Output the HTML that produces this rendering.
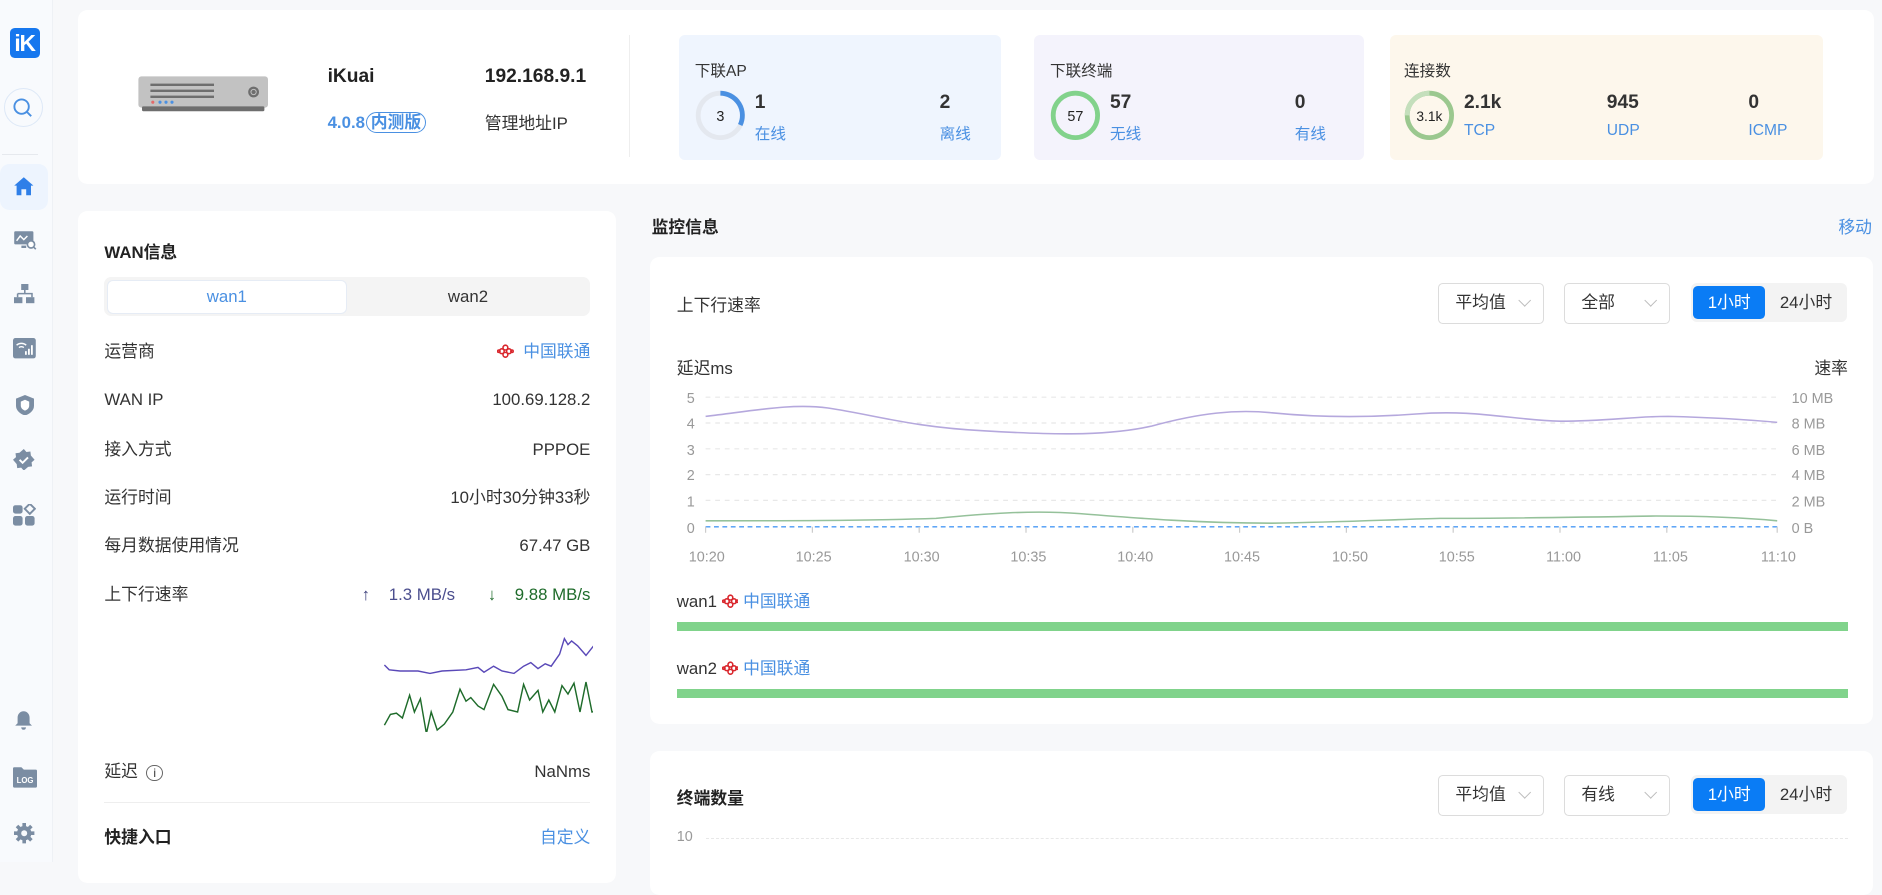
<!DOCTYPE html>
<html><head><meta charset="utf-8">
<style>
html{zoom:1.2}
*{box-sizing:border-box;margin:0;padding:0}
body{width:1569px;height:718px;overflow:hidden;background:#f7f8fa;font-family:"Liberation Sans","Noto Sans CJK SC",sans-serif;color:#333;position:relative;font-size:14px}
.a{position:absolute}
.card{position:absolute;background:#fff;border-radius:8px}
.side{left:0;top:0;width:44px;height:718px;background:#f8fafd;border-right:1px solid #eef1f5}
.blue{color:#4a90e2}
.sel{position:absolute;height:34px;border:1px solid #dcdcdc;border-radius:4px;background:#fff;font-size:14px;color:#333;padding:0 0 0 14px;line-height:32px}
.sel:after{content:"";position:absolute;right:12px;top:10px;width:7px;height:7px;border-right:1px solid #bbb;border-bottom:1px solid #bbb;transform:rotate(45deg)}
.seg{position:absolute;height:32px;background:#f3f3f3;border-radius:5px;width:130px}
.seg span{position:absolute;top:2px;height:28px;line-height:28px;font-size:14px;text-align:center}
.row{position:absolute;left:87px;width:405px;font-size:14px;color:#333;display:flex;justify-content:space-between;align-items:center;height:20px;line-height:20px}
.row b{font-weight:normal;display:flex;align-items:center}
.uni{display:inline-block;width:14px;height:12px;vertical-align:-1px}
</style></head><body>
<svg width="0" height="0" style="position:absolute"><defs><g id="u"><g fill="none" stroke="#d9262c" stroke-width="1.3"><circle cx="7" cy="3" r="2"/><circle cx="7" cy="9" r="2"/><circle cx="4" cy="6" r="2"/><circle cx="10" cy="6" r="2"/><circle cx="1.5" cy="6" r="1"/><circle cx="12.5" cy="6" r="1"/></g></g></defs></svg>
<div class="a side">
  <div class="a" style="left:8px;top:23px;width:25px;height:25px;background:#1677ee;border-radius:4px;color:#fff;font-weight:bold;font-size:19px;line-height:25px;text-align:center;letter-spacing:-1px">iK</div>
  <div class="a" style="left:3px;top:73px;width:33px;height:33px;border:1px solid #dde8f7;border-radius:50%"></div>
  <svg class="a" style="left:10px;top:81px" width="18" height="18" viewBox="0 0 18 18"><circle cx="8" cy="8" r="6" fill="none" stroke="#4a90e2" stroke-width="1.6"/><path d="M12.5 12.5l3.5 3.5" stroke="#4a90e2" stroke-width="1.6"/></svg>
  <div class="a" style="left:2px;top:128px;width:30px;height:1px;background:#e6e9ee"></div>
  <div class="a" style="left:0;top:137px;width:40px;height:38px;background:#edf4fe;border-radius:8px"></div>
  <svg class="a" style="left:11px;top:147px" width="18" height="17" viewBox="0 0 18 17"><path d="M9 1L1 8h2v8h4v-5h4v5h4V8h2z" fill="#2f7fe8"/></svg>
  <svg class="a" style="left:11px;top:192px" width="20" height="18" viewBox="0 0 20 18"><rect x="1" y="1" width="16" height="11" rx="1" fill="#7b8da3"/><path d="M3 9l3-4 3 3 3-3" stroke="#fff" stroke-width="1.2" fill="none"/><rect x="7" y="13" width="4" height="2" fill="#7b8da3"/><circle cx="15" cy="12" r="3" fill="#fff" stroke="#7b8da3" stroke-width="1.4"/><path d="M17 14l2 2" stroke="#7b8da3" stroke-width="1.4"/></svg>
  <svg class="a" style="left:12px;top:237px" width="18" height="17" viewBox="0 0 18 17"><rect x="6" y="0" width="6" height="5" fill="#7b8da3"/><path d="M9 5v3M3 8h12v3M3 8v3" stroke="#7b8da3" stroke-width="1.3" fill="none"/><rect x="0" y="11" width="7" height="5" fill="#7b8da3"/><rect x="10" y="11" width="7" height="5" fill="#7b8da3"/></svg>
  <svg class="a" style="left:11px;top:282px" width="19" height="17" viewBox="0 0 19 17"><rect x="0" y="0" width="19" height="17" rx="2" fill="#7b8da3"/><path d="M3 6a6 6 0 0 1 8 0M5 8a3 3 0 0 1 4 0" stroke="#fff" stroke-width="1.2" fill="none"/><rect x="10" y="11" width="1.5" height="3" fill="#fff"/><rect x="12.5" y="9" width="1.5" height="5" fill="#fff"/><rect x="15" y="6" width="1.5" height="8" fill="#fff"/></svg>
  <svg class="a" style="left:13px;top:329px" width="15" height="17" viewBox="0 0 15 17"><path d="M7.5 0L15 3v6c0 4-3.5 7-7.5 8C3.5 16 0 13 0 9V3z" fill="#7b8da3"/><path d="M7.5 4L11 5.5v3.5c0 2-1.7 3.5-3.5 4-1.8-.5-3.5-2-3.5-4V5.5z" fill="#fff"/></svg>
  <svg class="a" style="left:11px;top:374px" width="18" height="18" viewBox="0 0 18 18"><path d="M9 0l2.2 2.5 3.3-.4.4 3.3L18 9l-2.5 2.2.4 3.3-3.3.4L9 18l-2.2-2.5-3.3.4-.4-3.3L0 9l2.5-2.2-.4-3.3 3.3-.4z" fill="#7b8da3"/><path d="M5.5 9l2.5 2.5 4.5-4.5" stroke="#fff" stroke-width="1.6" fill="none"/></svg>
  <svg class="a" style="left:11px;top:420px" width="19" height="19" viewBox="0 0 19 19"><rect x="0" y="1" width="8" height="7" rx="2" fill="#7b8da3"/><rect x="0" y="10" width="8" height="8" rx="2" fill="#7b8da3"/><rect x="10" y="10" width="8" height="8" rx="2" fill="#7b8da3"/><rect x="11" y="1" width="6" height="6" transform="rotate(45 14 4)" fill="none" stroke="#7b8da3" stroke-width="1.6"/></svg>
  <svg class="a" style="left:12px;top:592px" width="16" height="17" viewBox="0 0 16 17"><path d="M8 1C5 1 3 3.5 3 6.5V11L1 13h14l-2-2V6.5C13 3.5 11 1 8 1z" fill="#7b8da3"/><path d="M6 14.5a2 2 0 0 0 4 0" fill="#7b8da3"/></svg>
  <svg class="a" style="left:11px;top:638px" width="20" height="19" viewBox="0 0 20 19"><path d="M0 2a1 1 0 0 1 1-1h6l2 2h10a1 1 0 0 1 1 1v13a1 1 0 0 1-1 1H1a1 1 0 0 1-1-1z" fill="#7b8da3"/><text x="10" y="14" font-size="6.5" font-weight="bold" fill="#fff" text-anchor="middle" font-family="Liberation Sans">LOG</text></svg>
  <svg class="a" style="left:12px;top:686px" width="17" height="17" viewBox="0 0 17 17"><circle cx="8.5" cy="8.5" r="6" fill="#7b8da3"/><g stroke="#7b8da3" stroke-width="3"><path d="M8.5 0v17M0 8.5h17M2.5 2.5l12 12M14.5 2.5l-12 12"/></g><circle cx="8.5" cy="8.5" r="2.5" fill="#f8fafd"/></svg>
</div>

<div class="card" style="left:65px;top:8px;width:1497px;height:145px"></div>
<svg class="a" style="left:113px;top:62px" width="112" height="34" viewBox="0 0 112 34"><rect x="2" y="2" width="108" height="26" rx="2.5" fill="#c2c2c2"/><rect x="5" y="27" width="102" height="4" rx="1" fill="#6e6e6e"/><rect x="12" y="8" width="53" height="2" fill="#6e6e6e"/><rect x="12" y="13" width="53" height="2" fill="#6e6e6e"/><rect x="12" y="18" width="53" height="2" fill="#6e6e6e"/><circle cx="14" cy="23.5" r="1.3" fill="#e36a6a"/><circle cx="20" cy="23.5" r="1.3" fill="#4a90e2"/><circle cx="25" cy="23.5" r="1.3" fill="#4a90e2"/><circle cx="30" cy="23.5" r="1.3" fill="#4a90e2"/><circle cx="98" cy="15" r="4.5" fill="#6e6e6e"/><circle cx="98" cy="15" r="2.2" fill="none" stroke="#c2c2c2" stroke-width=".8"/></svg>
<div class="a" style="left:273px;top:55px;font-size:16px;font-weight:bold;color:#222">iKuai</div>
<div class="a" style="left:273px;top:91px;font-size:14px;color:#4a90e2;font-weight:bold">4.0.8<span style="border:1px solid #4a90e2;border-radius:10px;padding:0 3px;margin-left:1px">内测版</span></div>
<div class="a" style="left:404px;top:55px;font-size:16px;font-weight:bold;color:#222">192.168.9.1</div>
<div class="a" style="left:404px;top:92px;font-size:14px;color:#333">管理地址IP</div>
<div class="a" style="left:524px;top:29px;width:1px;height:102px;background:#eee"></div>

<div class="a" style="left:566px;top:29px;width:268px;height:104px;background:#eff5fe;border-radius:5px"></div>
<div class="a" style="left:579px;top:49px;font-size:13px">下联AP</div>
<svg class="a" style="left:578px;top:74px" width="44" height="44" viewBox="0 0 44 44"><circle cx="22" cy="22" r="18.5" fill="none" stroke="#e4e8ef" stroke-width="4"/><path d="M22 3.5A18.5 18.5 0 0 1 38.5 30" fill="none" stroke="#4a90e2" stroke-width="4"/><text x="22" y="26.5" font-size="12" text-anchor="middle" fill="#222" font-family="Liberation Sans">3</text></svg>
<div class="a" style="left:629px;top:77px;font-size:16px;font-weight:bold">1</div>
<div class="a blue" style="left:629px;top:102px;font-size:13px">在线</div>
<div class="a" style="left:783px;top:77px;font-size:16px;font-weight:bold">2</div>
<div class="a blue" style="left:783px;top:102px;font-size:13px">离线</div>

<div class="a" style="left:862px;top:29px;width:275px;height:104px;background:#f4f3fc;border-radius:5px"></div>
<div class="a" style="left:875px;top:49px;font-size:13px">下联终端</div>
<svg class="a" style="left:874px;top:74px" width="44" height="44" viewBox="0 0 44 44"><circle cx="22" cy="22" r="18.5" fill="none" stroke="#82d28b" stroke-width="4"/><text x="22" y="26.5" font-size="12" text-anchor="middle" fill="#222" font-family="Liberation Sans">57</text></svg>
<div class="a" style="left:925px;top:77px;font-size:16px;font-weight:bold">57</div>
<div class="a blue" style="left:925px;top:102px;font-size:13px">无线</div>
<div class="a" style="left:1079px;top:77px;font-size:16px;font-weight:bold">0</div>
<div class="a blue" style="left:1079px;top:102px;font-size:13px">有线</div>

<div class="a" style="left:1158px;top:29px;width:361px;height:104px;background:#fdf7ec;border-radius:5px"></div>
<div class="a" style="left:1170px;top:49px;font-size:13px">连接数</div>
<svg class="a" style="left:1169px;top:74px" width="44" height="44" viewBox="0 0 44 44"><circle cx="22" cy="22" r="18.5" fill="none" stroke="#9bc88f" stroke-width="4"/><path d="M22 3.5A18.5 18.5 0 0 0 3.5 22" fill="none" stroke="#c4dfbc" stroke-width="4"/><text x="22" y="26.5" font-size="11.5" text-anchor="middle" fill="#222" font-family="Liberation Sans">3.1k</text></svg>
<div class="a" style="left:1220px;top:77px;font-size:16px;font-weight:bold">2.1k</div>
<div class="a blue" style="left:1220px;top:102px;font-size:13px">TCP</div>
<div class="a" style="left:1339px;top:77px;font-size:16px;font-weight:bold">945</div>
<div class="a blue" style="left:1339px;top:102px;font-size:13px">UDP</div>
<div class="a" style="left:1457px;top:77px;font-size:16px;font-weight:bold">0</div>
<div class="a blue" style="left:1457px;top:102px;font-size:13px">ICMP</div>

<div class="card" style="left:65px;top:176px;width:448px;height:560px"></div>
<div class="a" style="left:87px;top:199px;font-size:14px;font-weight:bold;color:#222">WAN信息</div>
<div class="a" style="left:87px;top:231px;width:405px;height:32px;background:#f4f4f4;border-radius:6px"></div>
<div class="a" style="left:89px;top:233px;width:200px;height:29px;background:#fff;border:1px solid #e6ecf5;border-radius:5px;text-align:center;line-height:27px;color:#4a90e2;font-size:14px">wan1</div>
<div class="a" style="left:290px;top:233px;width:200px;height:29px;text-align:center;line-height:29px;font-size:14px">wan2</div>
<div class="row" style="top:283px">运营商<b class="blue"><svg class="uni" viewBox="0 0 14 12"><use href="#u"/></svg>&nbsp;&nbsp;中国联通</b></div>
<div class="row" style="top:323px">WAN IP<b>100.69.128.2</b></div>
<div class="row" style="top:365px">接入方式<b>PPPOE</b></div>
<div class="row" style="top:405px">运行时间<b>10小时30分钟33秒</b></div>
<div class="row" style="top:445px">每月数据使用情况<b>67.47 GB</b></div>
<div class="row" style="top:486px">上下行速率<b><span style="color:#3a3d7a">↑</span>&nbsp;&nbsp;&nbsp;&nbsp;<span style="color:#4b4e8e">1.3 MB/s</span>&nbsp;&nbsp;&nbsp;&nbsp;&nbsp;&nbsp;&nbsp;<span style="color:#1e6b2a">↓</span>&nbsp;&nbsp;&nbsp;&nbsp;<span style="color:#1e6b2a">9.88 MB/s</span></b></div>
<svg class="a" style="left:318px;top:524px" width="176" height="92" viewBox="0 0 352 184"><polyline fill="none" stroke="#5a49b8" stroke-width="2.4" points="4,60 12,68 30,70 60,70 80,74 100,70 140,68 160,64 170,72 186,62 200,70 220,74 236,62 248,56 260,66 272,58 282,62 296,42 304,16 310,26 316,20 326,28 340,44 356,24 376,6 394,34 410,6 420,20 440,16 448,28 458,20 472,32 478,26"/></svg>
<svg class="a" style="left:318px;top:518px" width="176" height="92" viewBox="0 0 352 184"><polyline fill="none" stroke="#1e6b2a" stroke-width="2.4" points="4,172 14,154 24,152 34,160 46,122 54,150 64,128 74,186 82,150 92,180 104,170 118,150 130,112 140,132 148,126 160,140 170,146 186,104 200,124 210,146 226,150 236,104 246,130 260,114 268,150 278,130 288,150 300,106 310,120 320,102 330,150 340,100 350,150 366,146 376,132 384,150 398,136 412,132"/></svg>
<div class="row" style="top:633px"><span>延迟 <span style="display:inline-block;width:14px;height:14px;border:1px solid #666;border-radius:50%;font-size:10px;text-align:center;line-height:12px;vertical-align:0;margin-left:3px">i</span></span><b>NaNms</b></div>
<div class="a" style="left:87px;top:668px;width:405px;height:1px;background:#eee"></div>
<div class="row" style="top:688px;font-weight:bold;color:#222">快捷入口<b class="blue">自定义</b></div>

<div class="a" style="left:543px;top:178px;font-size:14px;font-weight:bold;color:#222">监控信息</div>
<div class="a blue" style="left:1532px;top:178px;font-size:14px">移动</div>
<div class="card" style="left:542px;top:214px;width:1019px;height:389px"></div>
<div class="a" style="left:564px;top:243px;font-size:14px">上下行速率</div>
<div class="sel" style="left:1198px;top:236px;width:89px">平均值</div>
<div class="sel" style="left:1303px;top:236px;width:89px">全部</div>
<div class="seg" style="left:1409px;top:236px"><span style="left:2px;width:60px;background:#0a7cf5;color:#fff;border-radius:4px">1小时</span><span style="left:62px;width:68px;color:#333">24小时</span></div>
<div class="a" style="left:564px;top:296px;font-size:14px">延迟ms</div>
<div class="a" style="left:1512px;top:296px;font-size:14px">速率</div>
<svg class="a" style="left:560px;top:320px" width="980" height="160" viewBox="560 320 980 160">
<g stroke="#e8e8e8" stroke-dasharray="4 4" stroke-width="1"><path d="M588 331H1481M588 352.5H1481M588 374H1481M588 395.5H1481M588 417H1481"/></g>
<path d="M588 439H1481" stroke="#4a9af5" stroke-dasharray="4 3" stroke-width="1.2"/>
<g stroke="#ccc"><path d="M588 439v5M677 439v5M766 439v5M855 439v5M944 439v5M1033 439v5M1122 439v5M1211 439v5M1300 439v5M1389 439v5M1481 439v5"/></g>
<g font-size="12" fill="#999" font-family="Liberation Sans" text-anchor="end"><text x="579" y="336">5</text><text x="579" y="357">4</text><text x="579" y="379">3</text><text x="579" y="400">2</text><text x="579" y="422">1</text><text x="579" y="444">0</text></g>
<g font-size="12" fill="#999" font-family="Liberation Sans"><text x="1493" y="336">10 MB</text><text x="1493" y="357">8 MB</text><text x="1493" y="379">6 MB</text><text x="1493" y="400">4 MB</text><text x="1493" y="422">2 MB</text><text x="1493" y="444">0 B</text></g>
<g font-size="12" fill="#999" font-family="Liberation Sans" text-anchor="middle"><text x="589" y="468">10:20</text><text x="678" y="468">10:25</text><text x="768" y="468">10:30</text><text x="857" y="468">10:35</text><text x="946" y="468">10:40</text><text x="1035" y="468">10:45</text><text x="1125" y="468">10:50</text><text x="1214" y="468">10:55</text><text x="1303" y="468">11:00</text><text x="1392" y="468">11:05</text><text x="1482" y="468">11:10</text></g>
<path d="M588 347C630 342 660 336 690 340C730 346 760 356 820 359C870 362 920 364 960 355C1000 344 1030 341 1060 344C1100 348 1140 348 1180 345C1230 341 1260 350 1300 351C1340 351 1360 347 1390 347C1430 348 1460 350 1481 352" fill="none" stroke="#b5a8dd" stroke-width="1.3"/>
<path d="M588 434C650 434 720 434 780 432C820 428 860 425 900 428C950 432 1000 436 1060 436C1120 435 1160 433 1200 432C1260 432 1320 431 1380 430C1420 430 1450 431 1481 434" fill="none" stroke="#95c19a" stroke-width="1.3"/>
</svg>
<div class="a" style="left:564px;top:490px;font-size:14px">wan1 <svg class="uni" viewBox="0 0 14 12"><use href="#u"/></svg> <span class="blue">中国联通</span></div>
<div class="a" style="left:564px;top:518px;width:976px;height:8px;background:#80d38b"></div>
<div class="a" style="left:564px;top:546px;font-size:14px">wan2 <svg class="uni" viewBox="0 0 14 12"><use href="#u"/></svg> <span class="blue">中国联通</span></div>
<div class="a" style="left:564px;top:574px;width:976px;height:8px;background:#80d38b"></div>

<div class="card" style="left:542px;top:626px;width:1019px;height:120px"></div>
<div class="a" style="left:564px;top:654px;font-size:14px;font-weight:bold;color:#222">终端数量</div>
<div class="sel" style="left:1198px;top:646px;width:89px">平均值</div>
<div class="sel" style="left:1303px;top:646px;width:89px">有线</div>
<div class="seg" style="left:1409px;top:646px"><span style="left:2px;width:60px;background:#0a7cf5;color:#fff;border-radius:4px">1小时</span><span style="left:62px;width:68px;color:#333">24小时</span></div>
<div class="a" style="left:564px;top:691px;font-size:12px;color:#999">10</div>
<div class="a" style="left:588px;top:698px;width:952px;border-top:1px dashed #e8e8e8"></div>
</body></html>
